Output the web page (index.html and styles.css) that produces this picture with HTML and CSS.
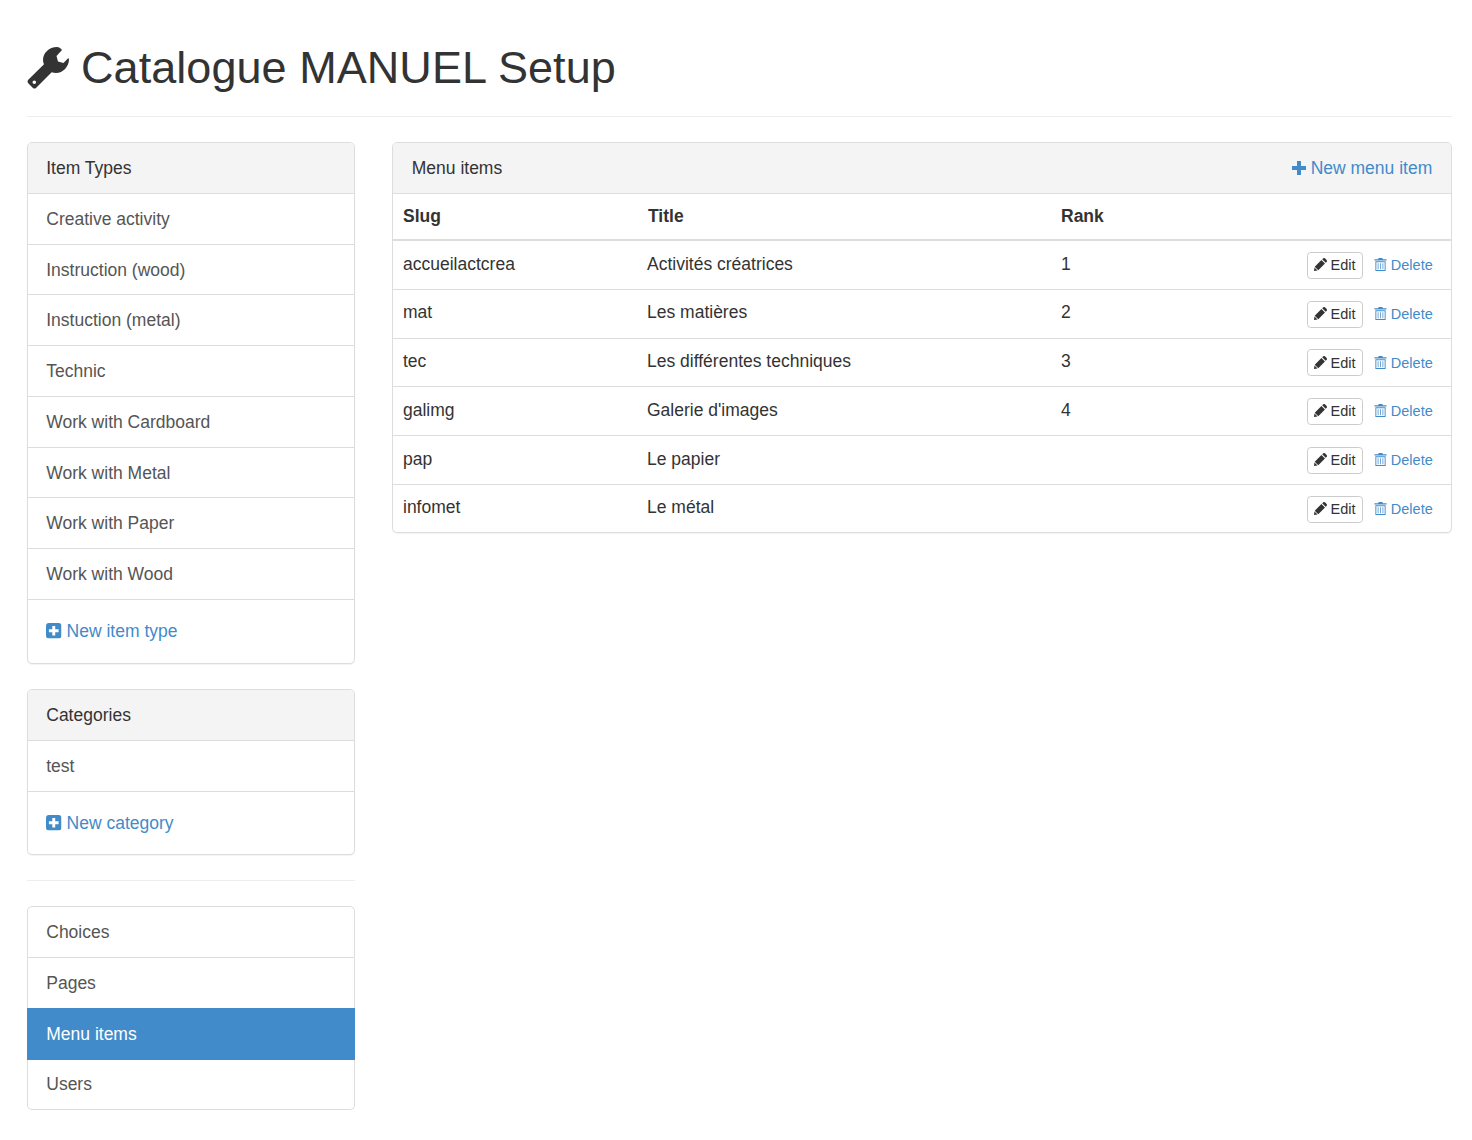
FILE: index.html
```html
<!DOCTYPE html>
<html lang="en">
<head>
  <meta charset="UTF-8">
  <title>Catalogue MANUEL Setup</title>
  <link rel="stylesheet" href="styles.css">
</head>
<body>
  <svg class="defs" width="0" height="0">
    <symbol id="i-pencil" viewBox="0 0 14 14"><path d="M10 0.200Q11-0.200 11.800 0.400L13.600 2.200Q14.200 3 13.800 4L12.600 5.200 8.800 1.400ZM8 2.200 11.800 6 4.600 13.200 0.800 9.400ZM0.500 10.200 3.800 13.500 0 14Z"/></symbol>
    <symbol id="i-trash" viewBox="0 0 14 14"><path fill-rule="evenodd" d="M5 0H9L9.600 1.400H13.500V2.800H0.500V1.400H4.400ZM1.500 3.600H12.500V14H1.500ZM2.500 4.600V13H11.500V4.600ZM4 5.600H4.800V12H4ZM6.600 5.600H7.400V12H6.600ZM9.200 5.600H10V12H9.200Z"/></symbol>
    <symbol id="i-plus" viewBox="0 0 14 14"><path d="M5 0H9V5H14V9H9V14H5V9H0V5H5Z"/></symbol>
    <symbol id="i-plus-sign" viewBox="0 0 16 16"><path fill-rule="evenodd" d="M3 0H13A3 3 0 0 1 16 3V13A3 3 0 0 1 13 16H3A3 3 0 0 1 0 13V3A3 3 0 0 1 3 0ZM6.500 3V6.500H3V9.500H6.500V13H9.500V9.500H13V6.500H9.500V3Z"/></symbol>
  </svg>

  <div class="container">
    <div class="page-header">
      <h1>
        <svg class="wrench" viewBox="0 0 42 42"><path fill-rule="evenodd" d="M30 0C22 0 16 6 16 13C16 14.500 16.300 16 17 17.300L1 33Q0 34.500 1 36L6 41Q7.500 42 9 41L24.700 25.200C26 25.700 27.500 26 29 26C36 26 42 19.500 42 12.500L41.300 11L36.500 16L31 14.500L29.500 9L35 3C33.500 1 32 0 30 0Z M7.300 33.500A1.800 1.800 0 1 0 7.301 37.100A1.800 1.800 0 1 0 7.300 33.500Z"/></svg>
        Catalogue MANUEL Setup
      </h1>
    </div>

    <div class="layout">
      <div class="sidebar">
        <div class="panel">
          <div class="panel-heading">Item Types</div>
          <div class="list-group">
            <a class="list-item">Creative activity</a>
            <a class="list-item">Instruction (wood)</a>
            <a class="list-item">Instuction (metal)</a>
            <a class="list-item">Technic</a>
            <a class="list-item">Work with Cardboard</a>
            <a class="list-item">Work with Metal</a>
            <a class="list-item">Work with Paper</a>
            <a class="list-item">Work with Wood</a>
          </div>
          <div class="panel-body">
            <a class="link"><svg class="ic-sign"><use href="#i-plus-sign"/></svg> New item type</a>
          </div>
        </div>

        <div class="panel">
          <div class="panel-heading">Categories</div>
          <div class="list-group">
            <a class="list-item">test</a>
          </div>
          <div class="panel-body">
            <a class="link"><svg class="ic-sign"><use href="#i-plus-sign"/></svg> New category</a>
          </div>
        </div>

        <hr>

        <div class="nav-list">
          <a class="list-item">Choices</a>
          <a class="list-item">Pages</a>
          <a class="list-item active">Menu items</a>
          <a class="list-item">Users</a>
        </div>
      </div>

      <div class="main">
        <div class="panel">
          <div class="panel-heading heading-split">
            <span>Menu items</span>
            <a class="link"><svg class="ic-plus"><use href="#i-plus"/></svg> New menu item</a>
          </div>
          <table>
            <thead>
              <tr><th class="col-slug">Slug</th><th class="col-title">Title</th><th class="col-rank">Rank</th><th></th></tr>
            </thead>
            <tbody>
              <tr><td>accueilactcrea</td><td>Activités créatrices</td><td>1</td><td class="actions"><a class="btn-edit"><svg class="ic"><use href="#i-pencil"/></svg> Edit</a><a class="btn-del"><svg class="ic"><use href="#i-trash"/></svg> Delete</a></td></tr>
              <tr><td>mat</td><td>Les matières</td><td>2</td><td class="actions"><a class="btn-edit"><svg class="ic"><use href="#i-pencil"/></svg> Edit</a><a class="btn-del"><svg class="ic"><use href="#i-trash"/></svg> Delete</a></td></tr>
              <tr><td>tec</td><td>Les différentes techniques</td><td>3</td><td class="actions"><a class="btn-edit"><svg class="ic"><use href="#i-pencil"/></svg> Edit</a><a class="btn-del"><svg class="ic"><use href="#i-trash"/></svg> Delete</a></td></tr>
              <tr><td>galimg</td><td>Galerie d'images</td><td>4</td><td class="actions"><a class="btn-edit"><svg class="ic"><use href="#i-pencil"/></svg> Edit</a><a class="btn-del"><svg class="ic"><use href="#i-trash"/></svg> Delete</a></td></tr>
              <tr><td>pap</td><td>Le papier</td><td></td><td class="actions"><a class="btn-edit"><svg class="ic"><use href="#i-pencil"/></svg> Edit</a><a class="btn-del"><svg class="ic"><use href="#i-trash"/></svg> Delete</a></td></tr>
              <tr><td>infomet</td><td>Le métal</td><td></td><td class="actions"><a class="btn-edit"><svg class="ic"><use href="#i-pencil"/></svg> Edit</a><a class="btn-del"><svg class="ic"><use href="#i-trash"/></svg> Delete</a></td></tr>
            </tbody>
          </table>
        </div>
      </div>
    </div>
  </div>
</body>
</html>
```

FILE: styles.css
```css
body {
  font-family: "Liberation Sans", Arial, sans-serif;
  font-size: 17.5px;
  line-height: 25px;
  color: #333;
  background-color: #fff;
  margin: 0;
}
a {
  text-decoration: none;
}
.defs {
  position: absolute;
}
.container {
  padding: 0 20px 30px 27px;
}
.page-header {
  padding: 43px 0 11px;
  margin-bottom: 25px;
  border-bottom: 1px solid #eee;
}
h1 {
  font-size: 45px;
  font-weight: 500;
  line-height: 49.5px;
  letter-spacing: 0.05px;
  margin: 0 0 12.5px;
}
.wrench {
  width: 42px;
  height: 42px;
  fill: #333;
  vertical-align: -6px;
  margin-right: -0.5px;
}
.layout {
  display: flex;
  gap: 37px;
  align-items: flex-start;
}
.sidebar {
  width: 328px;
  flex: none;
}
.main {
  flex: 1;
}
.panel {
  background-color: #fff;
  border: 1px solid #ddd;
  border-radius: 5px;
  box-shadow: 0 1px 1px rgba(0,0,0,0.05);
  margin-bottom: 25px;
  overflow: hidden;
}
.panel-heading {
  background-color: #f4f4f4;
  border-bottom: 1px solid #ddd;
  padding: 12.5px 18.75px;
}
.sidebar .panel-heading {
  padding-left: 18.25px;
}
.heading-split {
  display: flex;
  justify-content: space-between;
}
.panel-body {
  padding: 18.75px 18.25px;
}
.panel:first-child .panel-body {
  padding-bottom: 19.45px;
}
.list-group {
  margin-top: -0.1px;
}
.list-item {
  display: block;
  box-sizing: border-box;
  height: 50.75px;
  padding: 12.95px 18.25px 0;
  color: #555;
  background-color: #fff;
  border-bottom: 1px solid #ddd;
}
.link {
  color: #428bca;
}
hr {
  border: 0;
  border-top: 1px solid #eee;
  margin: 25px 0;
}
.nav-list .list-item {
  border: 1px solid #ddd;
  border-top: 0;
}
.nav-list .list-item:first-child {
  border-top: 1px solid #ddd;
  border-radius: 5px 5px 0 0;
  height: 51.75px;
}
.nav-list .list-item:last-child {
  border-radius: 0 0 5px 5px;
}
.nav-list .list-item.active {
  background-color: #428bca;
  color: #fff;
  border-color: #428bca;
  margin-top: -1px;
  height: 51.75px;
  padding-top: 13.95px;
  position: relative;
}
.ic-sign {
  width: 15.5px;
  height: 15.5px;
  fill: #428bca;
  vertical-align: -2px;
}
.ic-plus {
  width: 14px;
  height: 14px;
  fill: #428bca;
  vertical-align: -1px;
}
.ic {
  width: 13px;
  height: 13px;
  fill: currentColor;
  vertical-align: -1px;
}
table {
  width: 100%;
  border-collapse: collapse;
}
th {
  text-align: left;
  padding: 10px;
  border-bottom: 2px solid #ddd;
}
td {
  padding: 10.5px 10px 10px;
  vertical-align: top;
  border-top: 1px solid #ddd;
}
tbody tr:first-child td {
  border-top: 0;
}
.col-slug {
  width: 224px;
}
.col-title {
  width: 393px;
  padding-left: 11px;
}
.col-rank {
  width: 200px;
}
td.actions {
  padding: 10.75px 11px 10px 10px;
  text-align: right;
  white-space: nowrap;
}
tr:last-child td.actions {
  padding-bottom: 9.5px;
}
.btn-edit, .btn-del {
  display: inline-block;
  font-size: 14.5px;
  line-height: 22.5px;
  padding: 1.25px 6.25px;
  border: 1px solid transparent;
  border-radius: 3.75px;
}
.btn-edit {
  padding: 1.25px 6px;
  color: #333;
  background-color: #fff;
  border-color: #ccc;
}
.btn-del {
  color: #428bca;
  margin-left: 4px;
}
```
